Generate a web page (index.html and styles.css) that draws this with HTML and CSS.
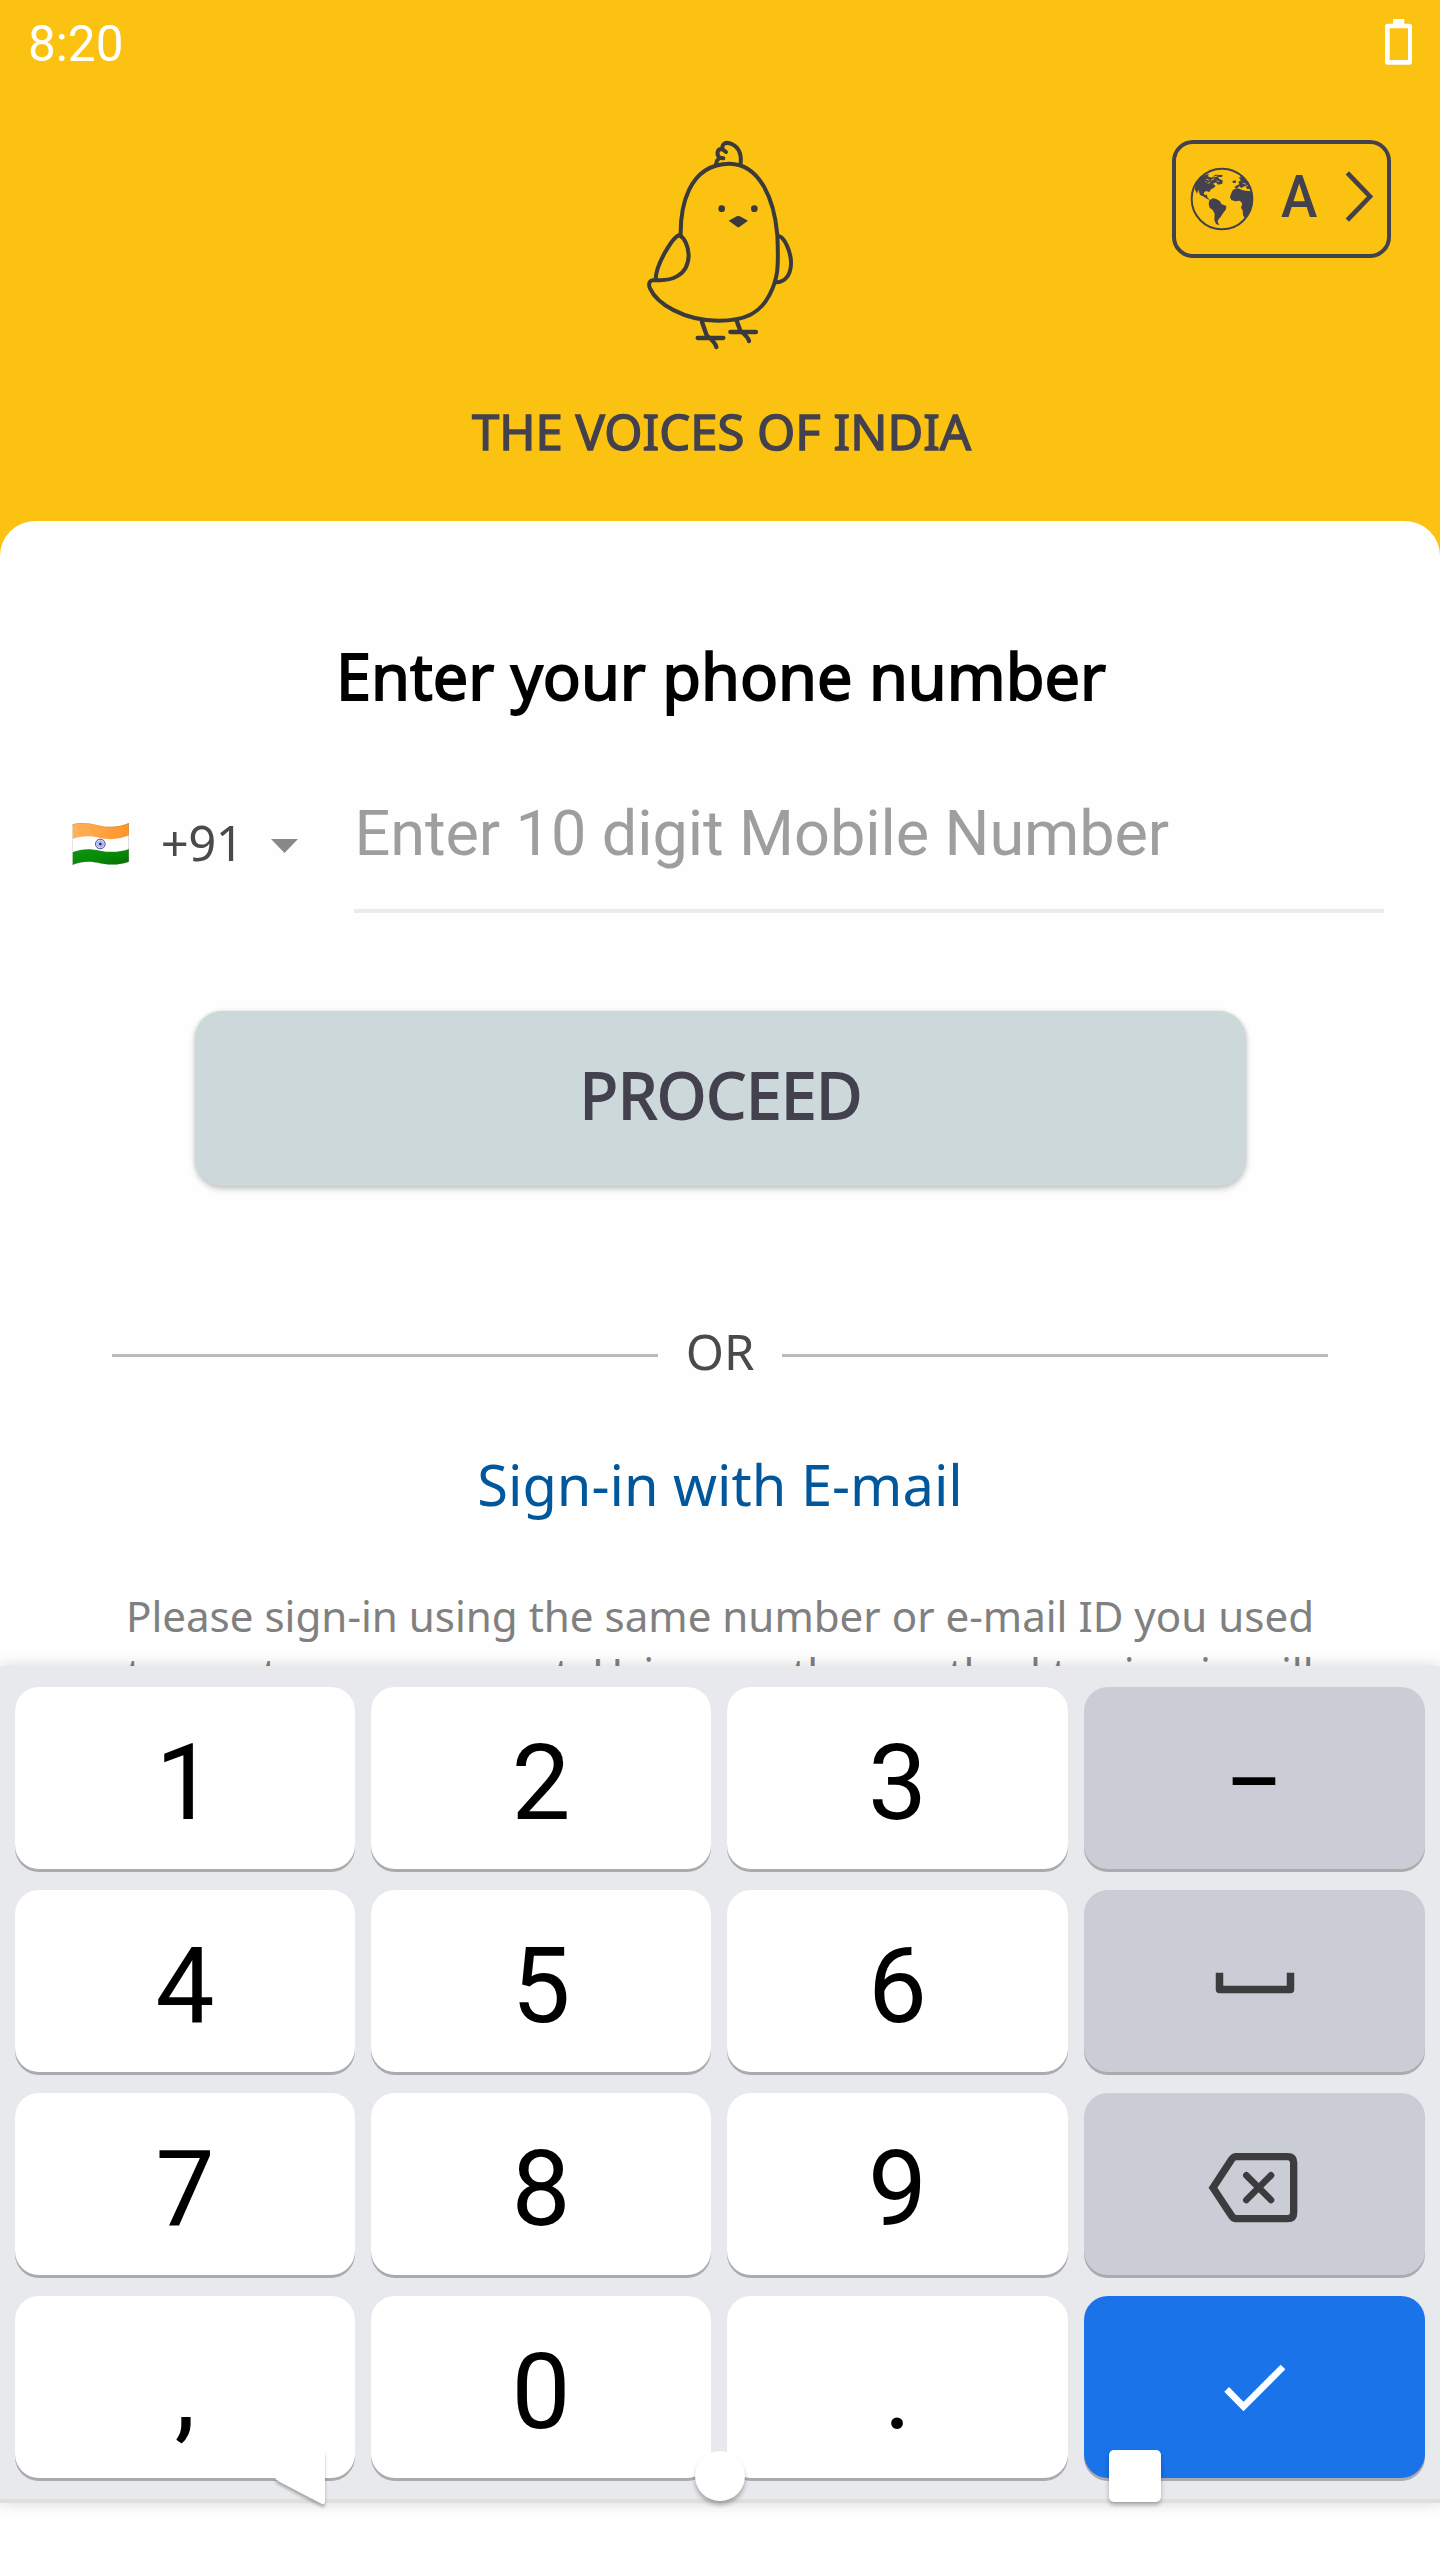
FILE: index.html
```html
<!DOCTYPE html>
<html lang="en">
<head>
<meta charset="utf-8">
<title>Sign in</title>
<link rel="stylesheet" href="styles.css">
</head>
<body>
<div class="screen">
  <header class="header">
    <div class="status">
      <span class="clock">8:20</span>
      <svg class="battery" viewBox="75 57 81 138"><path fill="#fff" fill-rule="evenodd" d="M99 57h34v14h15q8 0 8 8v107q0 8-8 8H83q-8 0-8-8V79q0-8 8-8h16zM89 85v95h55V85z"/></svg>
    </div>
    <div class="top">
      <div class="brand">
        <svg class="bird" viewBox="0 0 600 720" fill="none" stroke="#3a3a3c" stroke-width="12" stroke-linecap="round" stroke-linejoin="round">
          <path d="M182 345C181 270 200 132 329 131C420 132 463 240 472 345C477 450 472 478 449 524C420 580 375 602 295 602C190 602 110 550 90 505C84 490 88 480 105 480C150 484 205 470 206 405C205 380 195 355 178 345C160 350 108 430 107 478"/>
          <path d="M476 349C492 350 514 395 513 432C512 465 495 487 468 487"/>
          <path d="M288 133Q290 120 298 113L310 115M298 113C288 102 292 84 308 88L318 96M308 88C304 74 314 67 325 69C352 74 366 98 362 130"/>
          <path stroke-width="13" d="M246 606L260 646Q287 668 289 681M233 654H310M350 602L361 632Q385 652 387 663M331 636H408"/>
          <g fill="#3a3a3c" stroke="none"><circle cx="305" cy="266" r="10"/><circle cx="403" cy="266" r="10"/><path d="M326 302L350 289Q355 287 360 289L384 302L359 320Q355 323 351 320Z"/></g>
        </svg>
        <div class="tagline">THE VOICES OF INDIA</div>
      </div>
      <div class="lang">
        <svg class="globe" viewBox="119 140 192 192">
          <circle cx="215" cy="236" r="91" fill="none" stroke="#42414d" stroke-width="6"/>
          <g fill="#42414d">
            <path d="M137 190L150 173L164 164L176 161L172 168L184 172L194 163L217 164L215 170L203 170L208 177L217 180L216 190L203 193L197 186L188 190L196 197L189 204L182 207L177 215L167 212L160 217L163 224L170 223L171 231L179 239L171 236L158 228L149 224L144 208L140 220L133 206Z"/>
            <path d="M177 240L188 234L198 236L209 243L213 251L228 257L227 267L218 279L211 290L205 296L202 305L207 315L197 311L192 299L193 280L187 269L178 262L175 252Z"/>
            <path d="M248 208L264 204L273 208L284 211L299 212L306 224L308 242L303 264L294 282L283 293L278 284L277 270L272 262L276 250L269 241L255 243L243 239L239 230L243 218Z"/>
            <path d="M264 184L272 180L265 172L274 170L285 178L294 188L300 205L290 206L286 198L278 199L274 204L267 198L258 206L252 201L260 195L267 192Z"/>
            <path d="M246 182L257 180L256 188L248 188ZM268 168L276 165L280 172Z"/>
          </g>
          <path fill="none" stroke="#fbc212" stroke-width="2.500" d="M168 176l9 4M182 180l10-5M172 189l8-3M188 170l14-3M199 180l7 5M165 183l4 3M277 188l10 4M283 200l10-5"/>
        </svg>
        <span class="letter">A</span>
        <svg class="chevron" viewBox="584 150 84 158"><path fill="none" stroke="#42414d" stroke-width="14" d="M591 158L659 229L591 300"/></svg>
      </div>
    </div>
  </header>

  <main class="card">
    <h1 class="title">Enter your phone number</h1>
    <div class="phone">
      <div class="country">
        <svg class="flag" viewBox="96 127 172 130">
          <defs>
            <clipPath id="wave"><path d="M97 134C125 126 150 130 180 138C215 146 245 139 267 130V246C245 254 215 258 180 251C150 244 125 245 97 256Z"/></clipPath>
            <linearGradient id="green" x1="0" y1="0" x2="1" y2="1"><stop offset="0" stop-color="#0f9415"/><stop offset=".5" stop-color="#078a06"/><stop offset="1" stop-color="#046b04"/></linearGradient>
            <linearGradient id="orange" x1="0" y1="0" x2="1" y2="0"><stop offset="0" stop-color="#ffb25c"/><stop offset="1" stop-color="#ff9427"/></linearGradient>
          </defs>
          <g clip-path="url(#wave)">
            <path fill="#fff" d="M96 127h172v130H96z"/>
            <path fill="url(#orange)" d="M97 120H267V167C245 176 215 183 180 175C150 167 125 169 97 178Z"/>
            <path fill="url(#green)" d="M97 218C125 207 150 206 180 213C215 220 245 216 267 208V260H97Z"/>
            <path fill="none" stroke="#6b6b6b" stroke-opacity=".45" stroke-width="3" d="M97 134C125 126 150 130 180 138C215 146 245 139 267 130V246C245 254 215 258 180 251C150 244 125 245 97 256Z"/>
          </g>
          <circle cx="181" cy="193" r="14.500" fill="#dcdcf2" stroke="#2a2a9c" stroke-width="2.500"/>
          <circle cx="181" cy="193" r="8" fill="none" stroke="#8d8dce" stroke-width="5" stroke-dasharray="2 2"/>
          <circle cx="181" cy="193" r="4.500" fill="#25259a"/>
        </svg>
        <span class="code">+91</span>
        <svg class="arrow" viewBox="0 0 27 14"><path fill="#888" d="M0 0h27L13.500 14z"/></svg>
      </div>
      <div class="field">Enter 10 digit Mobile Number</div>
    </div>
    <div class="proceed">PROCEED</div>
    <div class="or"><span class="rule"></span><span class="or-text">OR</span><span class="rule"></span></div>
    <a class="email">Sign-in with E-mail</a>
    <p class="help">Please sign-in using the same number or e-mail ID you used<br>to create your account. Using another method to sign-in will</p>
  </main>

  <section class="keyboard">
    <div class="key">1</div><div class="key">2</div><div class="key">3</div><div class="key grey"><span class="dash">–</span></div>
    <div class="key">4</div><div class="key">5</div><div class="key">6</div>
    <div class="key grey"><svg class="space" viewBox="0 0 80 40"><path fill="none" stroke="#3c3c3e" stroke-width="7.500" stroke-linejoin="round" d="M4.500 11.700V28.500H75.500V11.700"/></svg></div>
    <div class="key">7</div><div class="key">8</div><div class="key">9</div>
    <div class="key grey"><svg class="del" viewBox="443 132 280 240" fill="none" stroke="#3c3c3e" stroke-width="22"><path d="M458 263L512 181Q518 170 528 170H682Q700 170 700 188V338Q700 356 682 356H528Q518 356 512 345Z"/><path stroke-width="20" stroke-linecap="round" d="M558 226L632 300M632 226L558 300"/></svg></div>
    <div class="key">,</div><div class="key">0</div><div class="key">.</div>
    <div class="key blue"><svg class="check" viewBox="483 771 200 180"><path fill="none" stroke="#fff" stroke-width="20" d="M500 868L550.500 919.500L669 801"/></svg></div>
  </section>

  <div class="nav">
    <svg class="back" viewBox="0 0 60 64"><path fill="#fff" d="M4 27.500Q6 25 10 23L50 1Q54-1 54 4V51Q54 56 49 53L7 31Q4 29 4 27.500Z"/></svg>
    <span class="home"></span>
    <span class="recent"></span>
  </div>
</div>
</body>
</html>
```
FILE: styles.css
```css
* { box-sizing: border-box; }
body { margin: 0; background: #fefefe; font-family: "Noto Sans", "Open Sans", sans-serif; }
svg { display: block; flex: none; }
.screen { position: relative; width: 1440px; height: 2560px; overflow: hidden; display: flex; flex-direction: column; background: #fbc212; }

.header { height: 521px; flex: none; color: #42414d; }
.status { height: 84px; padding: 15px 28px 0; display: flex; justify-content: space-between; align-items: flex-start; }
.clock { font: 49.5px/58px Roboto, sans-serif; color: #fff; }
.battery { width: 27px; height: 46px; margin-top: 4px; }
.top { display: grid; grid-template-columns: 1fr auto 1fr; padding: 36px 49px 0; }
.brand { grid-column: 2; display: flex; flex-direction: column; align-items: center; }
.bird { width: 200px; height: 240px; }
.tagline { margin-top: 38px; padding-left: 2px; margin-right: -1px; font-size: 49px; line-height: 67px; white-space: nowrap; -webkit-text-stroke: 1.4px #42414d; }
.lang { justify-self: end; margin-top: 20px; width: 219px; height: 118px; border: 4px solid #42414d; border-radius: 21px; display: flex; align-items: center; padding-left: 14px; }
.globe { width: 64px; height: 64px; }
.letter { width: 37px; margin-left: 27px; font: 500 59px/59px Roboto, sans-serif; transform: scaleX(.93); transform-origin: left; margin-top: -5px; }
.chevron { width: 28px; height: 53px; margin-left: 27px; margin-top: -5px; }

.card { height: 1145px; flex: none; overflow: hidden; background: #fefefe; border-radius: 35px 35px 0 0; padding-top: 112px; display: flex; flex-direction: column; align-items: center; }
.card > * { flex: none; }
.title { margin: 0; padding-left: 2px; font-size: 63px; line-height: 86px; font-weight: 400; color: #000; -webkit-text-stroke: 1.8px #000; }
.phone { margin-top: 77px; align-self: stretch; padding: 0 56px 0 72px; display: flex; }
.country { width: 281.5px; height: 67px; margin-top: 13px; display: flex; align-items: center; }
.flag { width: 57.3px; height: 43.3px; margin-top: 3px; }
.code { font-size: 49px; line-height: 67px; letter-spacing: -.5px; color: #4a4a4a; margin-left: 31.5px; width: 84px; }
.arrow { width: 27px; height: 14px; margin-left: 26px; margin-top: 7px; }
.field { flex: 1; height: 117px; padding: 1px 0 0 1px; letter-spacing: -.08px; border-bottom: 4px solid #ebebeb; font: 63px/74px Roboto, sans-serif; color: #9e9e9e; }
.proceed { margin-top: 98px; width: 1051px; height: 175px; border-radius: 27px; padding: 0 0 8px 2px; display: flex; align-items: center; justify-content: center; background: #cdd8da; color: #42414d; font-size: 63px; -webkit-text-stroke: 1.8px #42414d; box-shadow: 0 3px 6px rgba(0,0,0,.22), 0 0 4px rgba(0,0,0,.08); }
.or { margin-top: 132px; align-self: stretch; padding: 0 112px; display: flex; align-items: center; }
.rule { flex: 1; height: 3px; background: #bababa; }
.or-text { width: 124px; text-align: center; padding-bottom: 7px; font-size: 49px; line-height: 67px; color: #4a4a4a; }
.email { margin-top: 54px; font-size: 56px; line-height: 76px; color: #01579b; }
.help { margin: 65px 0 0; font-size: 42.1px; line-height: 57px; color: #808080; text-align: center; white-space: nowrap; }

.keyboard { height: 837px; flex: none; position: relative; padding: 21px 15px 0; border-bottom: 4px solid #dfdfe0; background: #e8e9ed; box-shadow: 0 0 14px rgba(0,0,0,.16); display: grid; grid-template-columns: 340px 340px 341px 341px; grid-auto-rows: 182px; gap: 21px 16px; }
.key { display: flex; align-items: center; justify-content: center; background: #fff; border-radius: 24px; box-shadow: 0 3px 0 #a9abad; font: 105px/123px Roboto, sans-serif; color: #000; padding-top: 10px; }
.grey { background: #cbcdd6; }
.blue { background: #1a73e8; }
.grey:has(svg), .blue { padding-top: 0; }
.dash { transform: scaleX(.83); }
.space { width: 80px; height: 40px; }
.del { width: 93.33px; height: 80px; }
.check { width: 66.67px; height: 60px; }

.nav { flex: 1; background: #fefefe; }
.back, .home, .recent { position: absolute; }
.back { left: 271px; top: 2450px; width: 60px; height: 64px; filter: drop-shadow(0 3px 1.5px rgba(0,0,0,.28)); }
.home { left: 695px; top: 2451px; width: 50px; height: 50px; border-radius: 50%; background: #fff; box-shadow: 0 4px 4px rgba(0,0,0,.28); }
.recent { left: 1109px; top: 2450px; width: 52px; height: 52px; border-radius: 5px; background: #fff; box-shadow: 0 3px 4px rgba(0,0,0,.28); }
```
